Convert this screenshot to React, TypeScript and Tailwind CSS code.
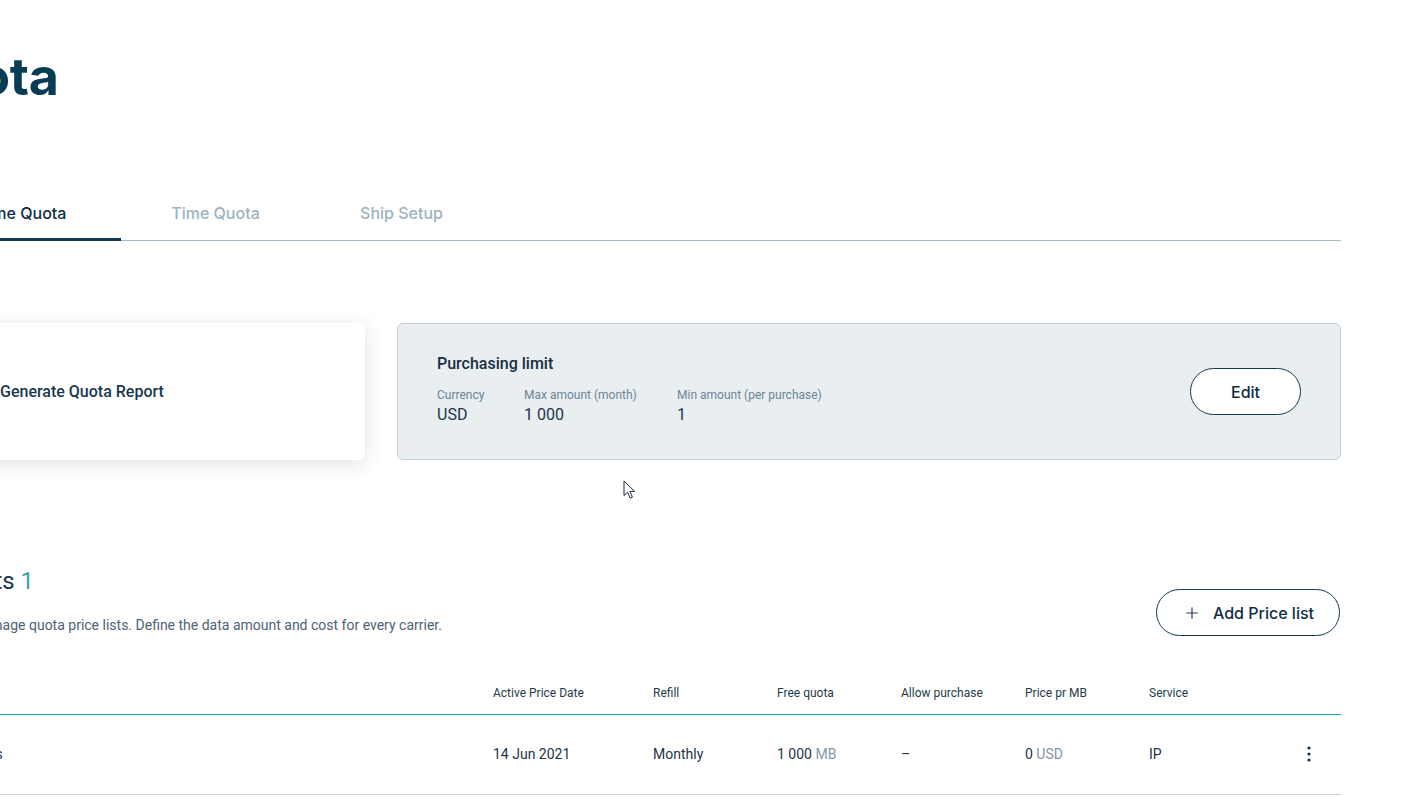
import { FileText, Plus } from "lucide-react";

type Limit = { label: string; value: string };

const limits: Limit[] = [
  { label: "Currency", value: "USD" },
  { label: "Max amount (month)", value: "1 000" },
  { label: "Min amount (per purchase)", value: "1" }
];

const tabs = [
  { name: "Volume Quota", width: "w-[217px]", active: true },
  { name: "Time Quota", width: "w-[189px]", active: false },
  { name: "Ship Setup", width: "w-[183px]", active: false }
];

const columns = [
  "",
  "Active Price Date",
  "Refill",
  "Free quota",
  "Allow purchase",
  "Price pr MB",
  "Service",
  ""
];

const gridCols =
  "grid grid-cols-[589px_160px_124px_124px_124px_124px_1fr_64px]";

function KebabIcon() {
  return (
    <svg width="4" height="16" viewBox="0 0 4 16" aria-hidden="true">
      <circle cx="2" cy="2" r="1.6" fill="#10324a" />
      <circle cx="2" cy="8" r="1.6" fill="#10324a" />
      <circle cx="2" cy="14" r="1.6" fill="#10324a" />
    </svg>
  );
}

function Pointer() {
  return (
    <svg
      className="pointer-events-none absolute left-[623px] top-[480px]"
      width="14"
      height="21"
      viewBox="0 0 14 21"
      aria-hidden="true"
    >
      <path
        d="M1 1 L1 15.5 L4.6 12.2 L7.2 18.2 L9.4 17.2 L6.9 11.4 L11.6 11.4 Z"
        fill="#ffffff"
        stroke="#1a2e40"
        strokeWidth="1"
        strokeLinejoin="round"
      />
    </svg>
  );
}

export default function App() {
  return (
    <div className="relative min-h-[797px] overflow-hidden bg-white font-[Roboto,sans-serif] text-[#1e3547]">
      <div className="-ml-24 w-[1437px] pt-[51px]">
        <h1 className="pl-[2px] font-[Inter,sans-serif] text-[52px] font-bold leading-[52px] tracking-[-0.3px] text-[#083b54]">
          Quota
        </h1>

        <nav className="mt-[84px] flex border-b border-b-[#a9b9c2] font-[Inter,sans-serif] text-base font-medium">
          {tabs.map((tab) => (
            <button
              key={tab.name}
              type="button"
              className={`${tab.width} -mb-px border-b-[3px] pb-[13px] pt-[14px] text-center leading-6 ${
                tab.active
                  ? "border-b-[#0c3a55] text-[#0d2f45]"
                  : "border-b-transparent text-[#9cb3be]"
              }`}
            >
              {tab.name}
            </button>
          ))}
        </nav>

        <div className="mt-[82px] grid grid-cols-[461px_1fr] gap-8">
          <section className="flex h-[137px] items-center gap-6 rounded-md bg-white px-6 shadow-[0_4px_20px_rgba(20,40,60,0.14)]">
            <FileText className="h-12 w-12 text-[#0c3a55]" strokeWidth={1.5} aria-hidden="true" />
            <span className="text-base font-medium text-[#173850]">
              Generate Quota Report
            </span>
          </section>

          <section className="flex h-[137px] items-center justify-between rounded-md border border-[#c3d0d7] bg-[#e9eef1] px-[39px]">
            <div className="pb-[4px]">
              <h2 className="text-base font-medium leading-6 text-[#182f40]">
                Purchasing limit
              </h2>
              <dl className="mt-[11px] flex">
                {limits.map((limit, i) => (
                  <div
                    key={limit.label}
                    className={i === 0 ? "w-[87px]" : i === 1 ? "w-[153px]" : ""}
                  >
                    <dt className="text-xs leading-4 text-[#6b8594]">
                      {limit.label}
                    </dt>
                    <dd className="text-base leading-6 text-[#1e3547]">
                      {limit.value}
                    </dd>
                  </div>
                ))}
              </dl>
            </div>
            <button
              type="button"
              className="h-[47px] w-[111px] rounded-full border border-[#133a52] bg-white font-[Inter,sans-serif] text-base font-medium text-[#0f2d44]"
            >
              Edit
            </button>
          </section>
        </div>

        <div className="mt-[105px] flex items-end justify-between">
          <div>
            <h2 className="pl-[6px] text-2xl leading-8 text-[#183548]">
              Price lists <span className="text-[#3f9db3]">1</span>
            </h2>
            <p className="mt-[18px] text-sm leading-5 text-[#4d6373]">
              Create and manage quota price lists. Define the data amount and cost for every carrier.
            </p>
          </div>
          <button
            type="button"
            className="mb-[-1px] mr-px flex h-[47px] w-[184px] items-center gap-3 rounded-full border border-[#133a52] bg-white pl-[26px] font-[Inter,sans-serif] text-base font-medium text-[#0f2d44]"
          >
            <Plus className="h-[18px] w-[18px] text-[#2b3a55]" strokeWidth={1.6} aria-hidden="true" />
            Add Price list
          </button>
        </div>

        <div className="mt-[50px]">
          <div className={`${gridCols} pb-[13px] text-xs leading-4 text-[#243b4c]`}>
            {columns.map((col, i) => (
              <div key={i}>{col}</div>
            ))}
          </div>
          <div className="h-px bg-[#12a3a3]" />
          <div className={`${gridCols} items-center pb-[30px] pt-[29px] text-sm leading-5 text-[#1e3547]`}>
            <div>Standard Prices</div>
            <div>14 Jun 2021</div>
            <div>Monthly</div>
            <div>
              1 000 <span className="text-[#8397a5]">MB</span>
            </div>
            <div>–</div>
            <div>
              0 <span className="text-[#8397a5]">USD</span>
            </div>
            <div>IP</div>
            <div className="flex justify-center">
              <KebabIcon />
            </div>
          </div>
          <div className="h-px bg-[#c7d3da]" />
        </div>
      </div>
      <Pointer />
    </div>
  );
}
